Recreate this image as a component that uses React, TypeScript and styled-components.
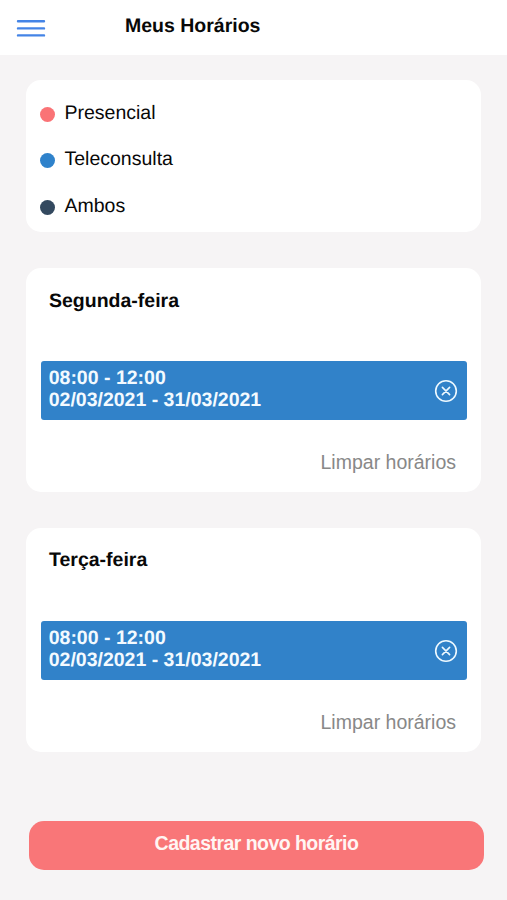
import React from "react";
import styled, { createGlobalStyle } from "styled-components";

const GlobalStyle = createGlobalStyle`
  * { box-sizing: border-box; }
  body {
    margin: 0;
    background: #f6f4f5;
    color: #080808;
    font: 19.5px/22px "Liberation Sans", Arial, sans-serif;
    text-rendering: geometricPrecision;
  }
`;

const Screen = styled.div`
  height: 900px;
  display: flex;
  flex-direction: column;
  overflow: hidden;
`;

const Header = styled.header`
  flex: none;
  height: 55px;
  display: flex;
  align-items: flex-start;
  gap: 79px;
  padding: 15px 16px 0;
  background: #fff;
`;

const MenuButton = styled.button`
  width: 30px;
  height: 26px;
  padding: 0;
  border: 0;
  background: none;
  svg { display: block; }
`;

const Title = styled.h1`
  margin: 0;
  font-size: inherit;
  font-weight: 700;
`;

const Content = styled.main`
  display: flex;
  flex-direction: column;
  gap: 36px;
  padding: 25px 26px 0;
`;

const Card = styled.section`
  width: 455px;
  border-radius: 15px;
  background: #fff;
`;

const Legend = styled(Card)`
  height: 152px;
  display: flex;
  flex-direction: column;
  gap: 24.4px;
  padding: 22px 14px 0;
`;

const LegendItem = styled.div`
  display: flex;
  align-items: flex-start;
  gap: 9.5px;
`;

const Dot = styled.span<{ $color: string }>`
  width: 15px;
  height: 15px;
  margin-top: 5px;
  border-radius: 50%;
  background: ${(p) => p.$color};
`;

const DayCard = styled(Card)<{ $titleTop: number }>`
  height: 224px;
  display: flex;
  flex-direction: column;
  padding: ${(p) => p.$titleTop}px 14px 0 15px;
`;

const DayName = styled.h2<{ $gap: number }>`
  margin: 0 8px ${(p) => p.$gap}px;
  font-size: inherit;
  font-weight: 700;
`;

const Slot = styled.div`
  height: 59px;
  display: flex;
  justify-content: space-between;
  align-items: flex-start;
  padding: 6px 9px 0 7.7px;
  border-radius: 3px;
  background: #3182c9;
  color: #f3faff;
`;

const SlotTimes = styled.div`
  font-weight: 700;
`;

const RemoveButton = styled.button`
  width: 24px;
  height: 24px;
  margin-top: 11.6px;
  padding: 0;
  border: 0;
  background: none;
  svg { display: block; }
`;

const ClearButton = styled.button`
  align-self: flex-end;
  margin: 31px 11px 0 0;
  padding: 0;
  border: 0;
  background: none;
  color: #888;
  font: inherit;
`;

const SubmitButton = styled.button`
  width: 455px;
  height: 49px;
  margin: 68.5px 0 0 29px;
  padding: 0 0 4px;
  border: 0;
  border-radius: 15px;
  background: #f97678;
  color: #fff5f3;
  font: inherit;
  font-weight: 700;
  letter-spacing: -0.54px;
`;

const legend = [
  { label: "Presencial", color: "#fa7376" },
  { label: "Teleconsulta", color: "#2f82cb" },
  { label: "Ambos", color: "#33495f" },
];

const days = [
  { name: "Segunda-feira", titleTop: 22, gap: 49 },
  { name: "Terça-feira", titleTop: 21, gap: 50 },
];

const MenuIcon = () => (
  <svg width="30" height="26" fill="none" stroke="#4484e6" strokeWidth="2.4" strokeLinecap="round">
    <path d="M2 6.3H28M2 13.4H28M2 20.4H28" />
  </svg>
);

const CloseIcon = () => (
  <svg width="24" height="24" fill="none" stroke="#eef9ff" strokeWidth="1.6" strokeLinecap="round">
    <circle cx="12" cy="12" r="10.3" />
    <path d="M8.4 8.4L15.6 15.6M15.6 8.4L8.4 15.6" />
  </svg>
);

export default function App() {
  return (
    <Screen>
      <GlobalStyle />
      <Header>
        <MenuButton aria-label="Menu"><MenuIcon /></MenuButton>
        <Title>Meus Horários</Title>
      </Header>
      <Content>
        <Legend>
          {legend.map((item) => (
            <LegendItem key={item.label}>
              <Dot $color={item.color} />
              <span>{item.label}</span>
            </LegendItem>
          ))}
        </Legend>
        {days.map((day) => (
          <DayCard key={day.name} $titleTop={day.titleTop}>
            <DayName $gap={day.gap}>{day.name}</DayName>
            <Slot>
              <SlotTimes>
                <div>08:00 - 12:00</div>
                <div>02/03/2021 - 31/03/2021</div>
              </SlotTimes>
              <RemoveButton aria-label="Remover"><CloseIcon /></RemoveButton>
            </Slot>
            <ClearButton>Limpar horários</ClearButton>
          </DayCard>
        ))}
      </Content>
      <SubmitButton>Cadastrar novo horário</SubmitButton>
    </Screen>
  );
}
